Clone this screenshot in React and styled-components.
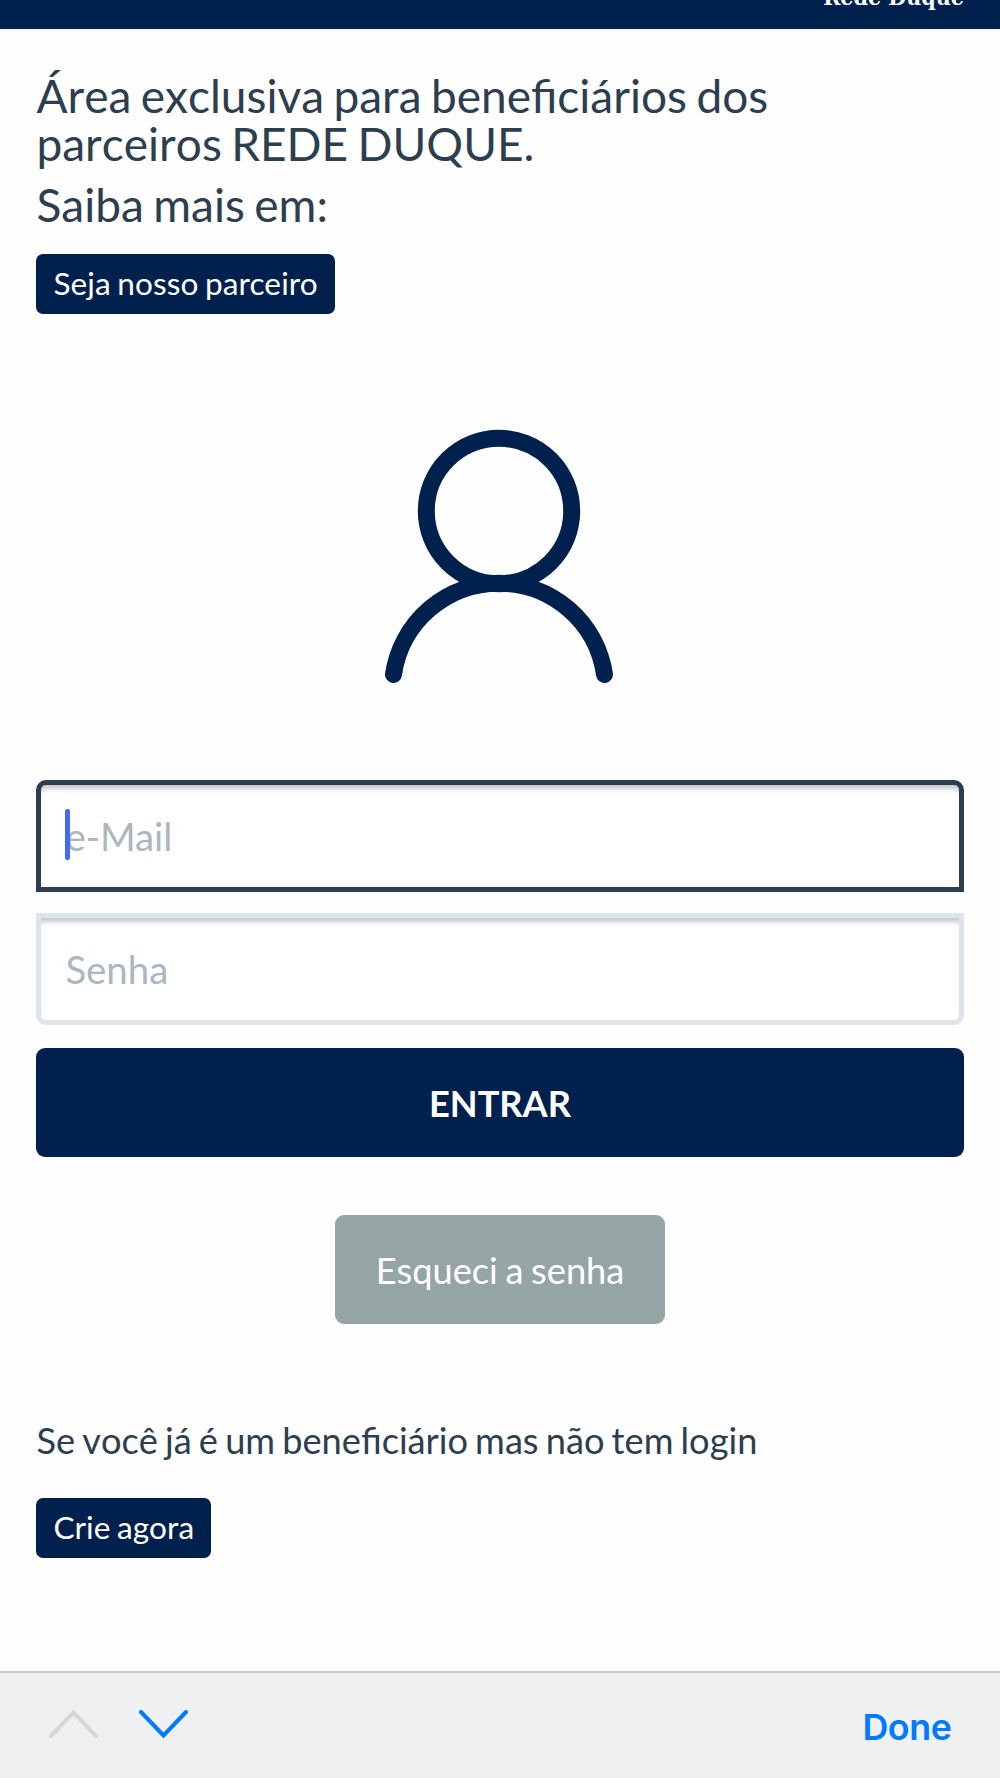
import styled, { createGlobalStyle } from "styled-components";

const GlobalStyle = createGlobalStyle`
  * {
    box-sizing: border-box;
  }
  body {
    margin: 0;
    background: #fefefe;
    color: #2c3e50;
    font-family: "Lato", sans-serif;
    font-kerning: none;
  }
`;
const Page = styled.div`
  width: 1000px;
  height: 1778px;
  display: flex;
  flex-direction: column;
  overflow: hidden;
`;
const Header = styled.header`
  height: 29px;
  flex: none;
  display: flex;
  justify-content: flex-end;
  align-items: flex-start;
  padding-right: 36px;
  background: #00204d;
  overflow: hidden;
`;
const Brand = styled.span`
  margin-top: -17px;
  color: white;
  font-family: "DejaVu Serif Condensed", "DejaVu Serif", serif;
  font-size: 23px;
  font-weight: 700;
  line-height: 28px;
  white-space: nowrap;
`;
const Main = styled.main`
  flex: 1;
  display: flex;
  flex-direction: column;
  align-items: flex-start;
  padding: 43px 36.4px 0;
`;
const Title = styled.h4`
  margin: 0 0 ${({ $last }) => ($last ? "25px" : "12px")};
  font-size: 46px;
  font-weight: 400;
  line-height: 48.3px;
  word-spacing: -2.4px;
`;
const SmallButton = styled.button`
  height: 60px;
  padding: 0 17px 2px;
  border: none;
  border-radius: 7px;
  background: #00204d;
  color: white;
  font-family: inherit;
  font-size: 31.6px;
  line-height: 58px;
  letter-spacing: 0.1px;
  word-spacing: -1.8px;
  white-space: nowrap;
`;
const Avatar = styled.svg`
  display: block;
  align-self: center;
  margin: 106.5px 0 86px;
`;
const Form = styled.form`
  width: 100%;
  display: flex;
  flex-direction: column;
`;
const Field = styled.label`
  position: relative;
  height: 111.5px;
  margin-bottom: ${({ $active }) => ($active ? "21.5px" : "23.5px")};
  border: 5px solid ${({ $active }) => ($active ? "#2c3e50" : "#dce4ec")};
  border-radius: ${({ $active }) => ($active ? "10px 10px 0 0" : "0 0 10px 10px")};
  box-shadow: inset 0 7px 5px -3px rgba(0, 0, 0, 0.22);
  background: white;
`;
const Input = styled.input`
  width: 100%;
  height: 100%;
  padding: 0 24px 1px;
  border: none;
  outline: none;
  background: none;
  color: #2c3e50;
  font-family: inherit;
  font-size: 38.4px;
  &::placeholder {
    color: #acb6c0;
    opacity: 1;
  }
`;
const Caret = styled.span`
  position: absolute;
  left: 24px;
  top: 24px;
  width: 5px;
  height: 51px;
  border-radius: 2px;
  background: #426bf2;
`;
const LargeButton = styled.button`
  width: ${({ $width }) => $width || "100%"};
  height: 109px;
  padding: 0;
  border: none;
  border-radius: 9px;
  background: ${({ $muted }) => ($muted ? "#95a5a6" : "#00204d")};
  color: white;
  font-family: inherit;
  font-size: 36.2px;
  font-weight: ${({ $muted }) => ($muted ? 400 : 700)};
  font-kerning: ${({ $muted }) => ($muted ? "none" : "normal")};
  word-spacing: -1.6px;
`;
const Forgot = styled.div`
  display: flex;
  justify-content: center;
  margin: 58px 0 90px;
`;
const Hint = styled.p`
  margin: 0 0 32px;
  font-size: 36.2px;
  line-height: 52px;
  word-spacing: -2.1px;
`;
const Toolbar = styled.footer`
  flex: none;
  height: 107px;
  display: flex;
  align-items: center;
  padding: 0 48.5px 3px 49px;
  border-top: 2px solid #c8cacd;
  background: #eff0f2;
`;
const Arrow = styled.svg`
  margin-right: 40.6px;
`;
const Done = styled.span`
  margin-left: auto;
  padding-top: 5px;
  color: #007aff;
  font-family: "Inter", sans-serif;
  font-size: 35.8px;
  font-weight: 600;
  letter-spacing: -0.4px;
`;

const App = () => {
  return (
    <Page>
      <GlobalStyle />
      <Header>
        <Brand>Rede Duque</Brand>
      </Header>
      <Main>
        <Title>
          Área exclusiva para beneficiários dos
          <br />
          parceiros REDE DUQUE.
        </Title>
        <Title $last>Saiba mais em:</Title>
        <SmallButton>Seja nosso parceiro</SmallButton>
        <Avatar width="230" height="274" viewBox="0 0 230 274" fill="none" stroke="#00204d" strokeWidth="17">
          <circle cx="114" cy="91" r="72.7" />
          <path d="M8.5 254.5A106.6 106.6 0 0 1 219.5 254.5" strokeLinecap="round" />
        </Avatar>
        <Form>
          <Field $active>
            <Input type="text" placeholder="e-Mail" />
            <Caret />
          </Field>
          <Field>
            <Input type="password" placeholder="Senha" />
          </Field>
          <LargeButton type="button">ENTRAR</LargeButton>
          <Forgot>
            <LargeButton type="button" $muted $width="330px">
              Esqueci a senha
            </LargeButton>
          </Forgot>
        </Form>
        <Hint>Se você já é um beneficiário mas não tem login</Hint>
        <SmallButton>Crie agora</SmallButton>
      </Main>
      <Toolbar>
        <Arrow width="49" height="28" viewBox="0 0 49 28" fill="none" stroke="#d4d5d7" strokeWidth="4" strokeLinecap="round">
          <path d="M2 26L24.5 2.5L47 26" />
        </Arrow>
        <Arrow width="49" height="28" viewBox="0 0 49 28" fill="none" stroke="#007aff" strokeWidth="4" strokeLinecap="round">
          <path d="M2 2L24.5 25.5L47 2" />
        </Arrow>
        <Done>Done</Done>
      </Toolbar>
    </Page>
  );
};

export default App;
